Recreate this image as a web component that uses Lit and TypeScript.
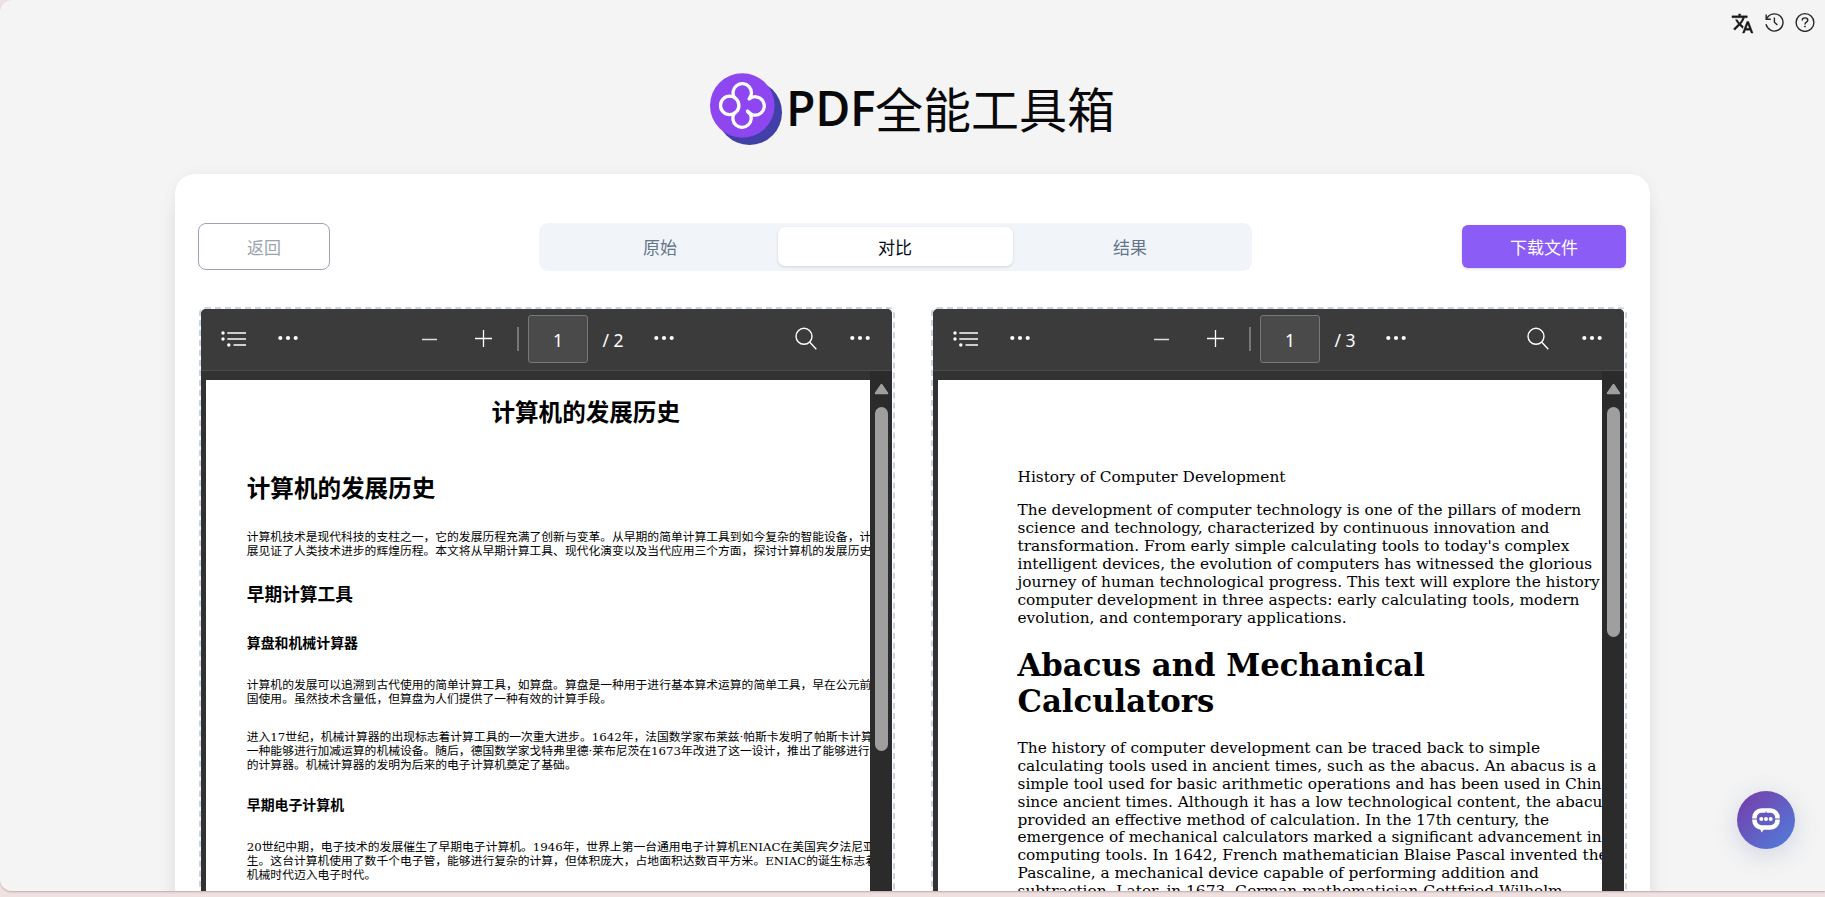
import { LitElement, html, svg, css } from "lit";
import { customElement, property } from "lit/decorators.js";

type Block = { kind: string; lines: string[] };

const ORIGINAL: Block[] = [
  { kind: "title", lines: ["计算机的发展历史"] },
  { kind: "h1", lines: ["计算机的发展历史"] },
  {
    kind: "p p1",
    lines: [
      "计算机技术是现代科技的支柱之一，它的发展历程充满了创新与变革。从早期的简单计算工具到如今复杂的智能设备，计",
      "展见证了人类技术进步的辉煌历程。本文将从早期计算工具、现代化演变以及当代应用三个方面，探讨计算机的发展历史",
    ],
  },
  { kind: "h2", lines: ["早期计算工具"] },
  { kind: "h3 first", lines: ["算盘和机械计算器"] },
  {
    kind: "p p2",
    lines: [
      "计算机的发展可以追溯到古代使用的简单计算工具，如算盘。算盘是一种用于进行基本算术运算的简单工具，早在公元前",
      "国使用。虽然技术含量低，但算盘为人们提供了一种有效的计算手段。",
    ],
  },
  {
    kind: "p p3",
    lines: [
      "进入17世纪，机械计算器的出现标志着计算工具的一次重大进步。1642年，法国数学家布莱兹·帕斯卡发明了帕斯卡计算",
      "一种能够进行加减运算的机械设备。随后，德国数学家戈特弗里德·莱布尼茨在1673年改进了这一设计，推出了能够进行",
      "的计算器。机械计算器的发明为后来的电子计算机奠定了基础。",
    ],
  },
  { kind: "h3 second", lines: ["早期电子计算机"] },
  {
    kind: "p p4",
    lines: [
      "20世纪中期，电子技术的发展催生了早期电子计算机。1946年，世界上第一台通用电子计算机ENIAC在美国宾夕法尼亚",
      "生。这台计算机使用了数千个电子管，能够进行复杂的计算，但体积庞大，占地面积达数百平方米。ENIAC的诞生标志着",
      "机械时代迈入电子时代。",
    ],
  },
];

const RESULT: Block[] = [
  { kind: "en-p en-title", lines: ["History of Computer Development"] },
  {
    kind: "en-p en-p1",
    lines: [
      "The development of computer technology is one of the pillars of modern",
      "science and technology, characterized by continuous innovation and",
      "transformation. From early simple calculating tools to today's complex",
      "intelligent devices, the evolution of computers has witnessed the glorious",
      "journey of human technological progress. This text will explore the history",
      "computer development in three aspects: early calculating tools, modern",
      "evolution, and contemporary applications.",
    ],
  },
  { kind: "en-h", lines: ["Abacus and Mechanical", "Calculators"] },
  {
    kind: "en-p en-p2",
    lines: [
      "The history of computer development can be traced back to simple",
      "calculating tools used in ancient times, such as the abacus. An abacus is a",
      "simple tool used for basic arithmetic operations and has been used in Chin",
      "since ancient times. Although it has a low technological content, the abacu",
      "provided an effective method of calculation. In the 17th century, the",
      "emergence of mechanical calculators marked a significant advancement in",
      "computing tools. In 1642, French mathematician Blaise Pascal invented the",
      "Pascaline, a mechanical device capable of performing addition and",
      "subtraction. Later, in 1673, German mathematician Gottfried Wilhelm",
    ],
  },
];

const dots = html`<svg class="dots" width="20" height="6" viewBox="0 0 20 6" fill="#fff">
  ${[2.3, 10, 17.7].map((x) => svg`<circle cx=${x} cy="3" r="2.1" />`)}
</svg>`;

@customElement("pdf-viewer")
export class PdfViewer extends LitElement {
  @property({ type: Number }) pages = 1;
  @property({ type: Number }) thumb = 100;
  @property({ attribute: false }) blocks: Block[] = [];

  static styles = css`
    :host {
      display: block;
      box-sizing: border-box;
      height: 700px;
      border: 2px dashed #cbd5e1;
      border-radius: 6px;
    }
    .frame {
      height: 100%;
      width: 691.5px;
      border-radius: 5px 5px 0 0;
      overflow: hidden;
      background: #323232;
      display: flex;
      flex-direction: column;
    }
    .bar {
      box-sizing: border-box;
      height: 62px;
      flex: none;
      background: #3b3b3b;
      border-bottom: 1px solid #4b4b4b;
      display: flex;
      align-items: center;
      padding: 0 22px 2px 20.4px;
      color: #fff;
      font: 17.5px/24px "Noto Sans", "Open Sans", sans-serif;
    }
    svg {
      display: block;
      flex: none;
    }
    .dots {
      margin-top: -1px;
    }
    .m1 {
      margin-left: 32px;
    }
    .m2 {
      margin-left: 123px;
    }
    .m3 {
      margin-left: 37.1px;
    }
    .sep {
      width: 2px;
      height: 24px;
      margin-left: 25px;
      background: #777;
    }
    .num {
      box-sizing: border-box;
      width: 60px;
      height: 48px;
      margin-left: 9px;
      border: 1px solid #777;
      border-radius: 3px;
      background: #4a4a4a;
      display: flex;
      align-items: center;
      justify-content: center;
      padding-top: 3px;
    }
    .count {
      width: 52px;
      box-sizing: border-box;
      padding: 3px 0 0 14.5px;
      margin-right: 14px;
      white-space: nowrap;
    }
    .grow {
      flex: 1;
    }
    .m4 {
      margin-left: 33px;
    }
    .body {
      flex: 1;
      min-height: 0;
      display: flex;
    }
    .page {
      width: 664px;
      margin: 9px 0 0 5px;
      background: #fff;
      overflow: hidden;
      color: #000;
      flex: none;
      white-space: nowrap;
    }
    .scroll {
      flex: 1;
      background: #2b2b2b;
      display: flex;
      flex-direction: column;
      align-items: center;
      padding: 12px 0 0 1px;
    }
    .thumb {
      width: 13px;
      margin-top: 12px;
      border-radius: 7px;
      background: #9f9f9f;
    }
    .title,
    .h1,
    .h2,
    .h3,
    .p {
      margin-left: 41.3px;
      font-family: "DejaVu Serif", "Noto Sans CJK SC", sans-serif;
    }
    .title,
    .h1 {
      font: bold 23.57px/24px "Noto Sans CJK SC", sans-serif;
    }
    .title {
      margin: 19px 0 0 286px;
    }
    .h1 {
      margin-top: 52px;
    }
    .h2 {
      font: bold 17.68px/18px "Noto Sans CJK SC", sans-serif;
      margin-top: 26px;
    }
    .h3 {
      font: bold 13.9px/14px "Noto Sans CJK SC", sans-serif;
    }
    .first {
      margin-top: 33px;
    }
    .second {
      margin-top: 25px;
    }
    .p {
      font-size: 11.79px;
      line-height: 14px;
    }
    .p .line {
      height: 14px;
    }
    .p1 {
      margin-top: 31px;
    }
    .p2 {
      margin-top: 29px;
    }
    .p3 {
      margin-top: 24px;
    }
    .p4 {
      margin-top: 29px;
    }
    .en-p,
    .en-h {
      margin-left: 80px;
      font-family: "DejaVu Serif", serif;
    }
    .en-p {
      font-size: 15.36px;
      line-height: 17.88px;
    }
    .en-title {
      margin-top: 89px;
    }
    .en-p1 {
      margin-top: 15.5px;
    }
    .en-h {
      font-size: 30.72px;
      line-height: 36px;
      font-weight: bold;
      margin-top: 19px;
    }
    .en-p2 {
      margin-top: 21.6px;
    }
  `;

  render() {
    return html`<div class="frame">
      <div class="bar">
        <svg width="25" height="16" viewBox="0 0 25 16">
          <g fill="#fff">
            <circle cx="2" cy="2" r="1.7" />
            <circle cx="2" cy="8" r="1.7" />
            <circle cx="7.8" cy="14" r="1.7" />
          </g>
          <path d="M6.3 2H25M6.3 8H25M12.5 14H25" stroke="#fff" stroke-width="1.5" />
        </svg>
        <span class="m1">${dots}</span>
        <svg class="m2" width="17" height="18" viewBox="0 0 17 18">
          <path d="M1 9.5H16" stroke="#ddd" stroke-width="1.7" />
        </svg>
        <svg class="m3" width="17" height="18" viewBox="0 0 17 18">
          <path d="M0 8.5H17M8.5 0V17" stroke="#fff" stroke-width="1.3" />
        </svg>
        <span class="sep"></span>
        <span class="num">1</span>
        <span class="count">/ ${this.pages}</span>
        ${dots}
        <span class="grow"></span>
        <svg width="22" height="23" viewBox="0 0 22 23" fill="none" stroke="#fff" stroke-width="1.4">
          <circle cx="9" cy="9.3" r="8" />
          <path d="M14.6 15.1L21.3 22.3" />
        </svg>
        <span class="m4">${dots}</span>
      </div>
      <div class="body">
        <div class="page">
          ${this.blocks.map(
            (b) => html`<div class=${b.kind}>${b.lines.map((l) => html`<div class="line">${l}</div>`)}</div>`
          )}
        </div>
        <div class="scroll">
          <svg width="15" height="12" viewBox="0 0 15 12">
            <path d="M7.5 1.8L13.3 10.3H1.7Z" fill="#9f9f9f" stroke="#9f9f9f" stroke-width="2" stroke-linejoin="round" />
          </svg>
          <div class="thumb" style="height:${this.thumb}px"></div>
        </div>
      </div>
    </div>`;
  }
}

@customElement("app-root")
export class AppRoot extends LitElement {
  static styles = css`
    :host {
      display: block;
      box-sizing: border-box;
      height: 897px;
      overflow: hidden;
      background: #f0e1e1;
      font-family: "Noto Sans", "Noto Sans CJK SC", sans-serif;
    }
    .window {
      position: relative;
      box-sizing: border-box;
      height: 891px;
      overflow: hidden;
      background: #f4f4f4;
      border-radius: 12px 0 0 12px;
    }
    .edge {
      border-radius: 12px 0 0 12px;
      box-shadow: 0 1px 2px rgba(80, 40, 40, 0.3);
    }
    .tools {
      display: flex;
      justify-content: flex-end;
      align-items: flex-start;
      height: 73px;
      box-sizing: border-box;
      padding: 12px 10px 0 0;
    }
    svg {
      display: block;
      flex: none;
    }
    .history {
      margin-left: 11.5px;
    }
    .help {
      margin-left: 10px;
    }
    .brand {
      display: flex;
      height: 101px;
      padding-left: 710px;
      color: #09090b;
      white-space: nowrap;
    }
    .brand h1 {
      margin: -2px 0 0 3px;
      font: 500 48px/72px "Noto Sans", "Noto Sans CJK SC", sans-serif;
      display: flex;
    }
    .latin {
      font-weight: 600;
      font-family: "Open Sans", sans-serif;
      width: 89px;
      letter-spacing: -0.3px;
      padding-top: 1px;
    }
    .cjk {
      font-family: "Noto Sans CJK SC", sans-serif;
      font-weight: 400;
    }
    .card {
      box-sizing: border-box;
      width: 1475px;
      height: 900px;
      margin-left: 175px;
      padding: 49px 23.5px 0;
      border-radius: 20px;
      background: #fff;
      box-shadow: 0 20px 25px -5px rgba(0, 0, 0, 0.1), 0 0 14px rgba(0, 0, 0, 0.04);
    }
    .row {
      display: flex;
      align-items: center;
      justify-content: space-between;
      height: 48px;
      margin: 0 0.5px 36px -0.5px;
      font-size: 17px;
      font-family: "Noto Sans CJK SC", sans-serif;
    }
    .back {
      box-sizing: border-box;
      width: 132px;
      height: 47px;
      margin-bottom: 1px;
      border: 1px solid #9ca3af;
      border-radius: 8px;
      color: #9ca3af;
      display: grid;
      place-items: center;
    }
    .tabs {
      box-sizing: border-box;
      width: 713px;
      height: 48px;
      margin-right: 2px;
      padding: 4px 4px 5px;
      border-radius: 9px;
      background: #f1f5f9;
      color: #64748b;
      display: grid;
      grid-template-columns: repeat(3, 1fr);
    }
    .tab {
      display: grid;
      place-items: center;
      border-radius: 7px;
    }
    .active {
      background: #fff;
      color: #020817;
      box-shadow: 0 1px 3px rgba(0, 0, 0, 0.14);
    }
    .download {
      width: 164px;
      height: 43px;
      margin-bottom: 1px;
      border-radius: 6px;
      background: #8b5cf6;
      color: #fff;
      display: grid;
      place-items: center;
      box-shadow: 0 1px 3px rgba(0, 0, 0, 0.15);
    }
    .compare {
      display: grid;
      grid-template-columns: 1fr 1fr;
      gap: 36px;
    }
    .chat {
      position: absolute;
      right: 30px;
      bottom: 42px;
      width: 58px;
      height: 58px;
      border-radius: 50%;
      background: linear-gradient(135deg, #783aa6, #4f80df);
      box-shadow: 0 6px 26px rgba(60, 90, 150, 0.2);
      display: grid;
      place-items: center;
    }
  `;

  render() {
    return html`<div class="edge"><div class="window">
      <div class="tools">
        <svg width="23" height="23" viewBox="0 0 24 24" fill="#18181b" stroke="#18181b" stroke-width="0.4">
          <path d="M12.87 15.07l-2.54-2.51.03-.03c1.74-1.94 2.98-4.17 3.71-6.53H17V4h-7V2H8v2H1v1.99h11.17C11.5 7.92 10.44 9.75 9 11.35 8.07 10.32 7.3 9.19 6.69 8h-2c.73 1.63 1.73 3.17 2.98 4.56l-5.09 5.02L4 19l5-5 3.11 3.11.76-2.04zM18.5 10h-2L12 22h2l1.12-3h4.75L21 22h2l-4.5-12zm-2.62 7l1.62-4.33L19.12 17h-3.24z" />
        </svg>
        <svg class="history" width="20" height="20" viewBox="0 0 20 20" fill="none" stroke="#27272a" stroke-width="1.4">
          <path d="M1 12.2A8.6 8.6 0 1 0 2.6 5.2L1.2 7" />
          <path d="M1.2 2.6V7.2H5.8" />
          <path d="M9.4 5.5V10.3L12.4 13" />
        </svg>
        <svg class="help" width="20" height="20" viewBox="0 0 20 20" fill="none" stroke="#27272a" stroke-width="1.4">
          <circle cx="10" cy="10.5" r="8.9" />
          <path d="M7.2 8.4C7.2 6.8 8.4 5.9 10 5.9S12.8 6.9 12.8 8.3C12.8 10.2 10 10.1 10 12.4" />
          <path d="M10 13.7V15.3" stroke-width="1.6" />
        </svg>
      </div>
      <div class="brand">
        <svg width="73" height="73" viewBox="0 0 73 73">
          <circle cx="39.5" cy="39.5" r="32.5" fill="#4040a8" />
          <circle cx="32.3" cy="32.5" r="32.3" fill="#8e47f0" />
          <g fill="none" stroke="#fff" stroke-width="3.3" stroke-linecap="round" stroke-linejoin="round">
            <circle cx="19.7" cy="32.4" r="9.2" />
            <path d="M24.4 24.6A9.2 9.2 0 1 1 39.2 25.9A9.2 9.2 0 1 1 37.6 38.2" />
            <path d="M24.2 40.3A9.2 9.2 0 1 0 39.6 39.9L37.6 38.2" />
          </g>
        </svg>
        <h1><span class="latin">PDF</span><span class="cjk">全能工具箱</span></h1>
      </div>
      <div class="card">
        <div class="row">
          <div class="back">返回</div>
          <div class="tabs">
            <div class="tab">原始</div>
            <div class="tab active">对比</div>
            <div class="tab">结果</div>
          </div>
          <div class="download">下载文件</div>
        </div>
        <div class="compare">
          <pdf-viewer .pages=${2} .thumb=${344} .blocks=${ORIGINAL}></pdf-viewer>
          <pdf-viewer .pages=${3} .thumb=${230} .blocks=${RESULT}></pdf-viewer>
        </div>
      </div>
      <div class="chat">
        <svg width="30" height="26" viewBox="0 0 30 26">
          <rect x="3.5" y="3.5" width="23" height="17" rx="7" fill="none" stroke="#fff" stroke-width="4.6" />
          <path d="M8.5 20H15L10.5 25.5Z" fill="#fff" />
          <path d="M0 12H6M24 12H30M15 4.5V7" stroke="#6a55b8" stroke-width="1" />
          <g fill="#fff">
            <circle cx="10.3" cy="12" r="2" />
            <circle cx="15" cy="12" r="2" />
            <circle cx="19.7" cy="12" r="2" />
          </g>
        </svg>
      </div>
    </div></div>`;
  }
}
